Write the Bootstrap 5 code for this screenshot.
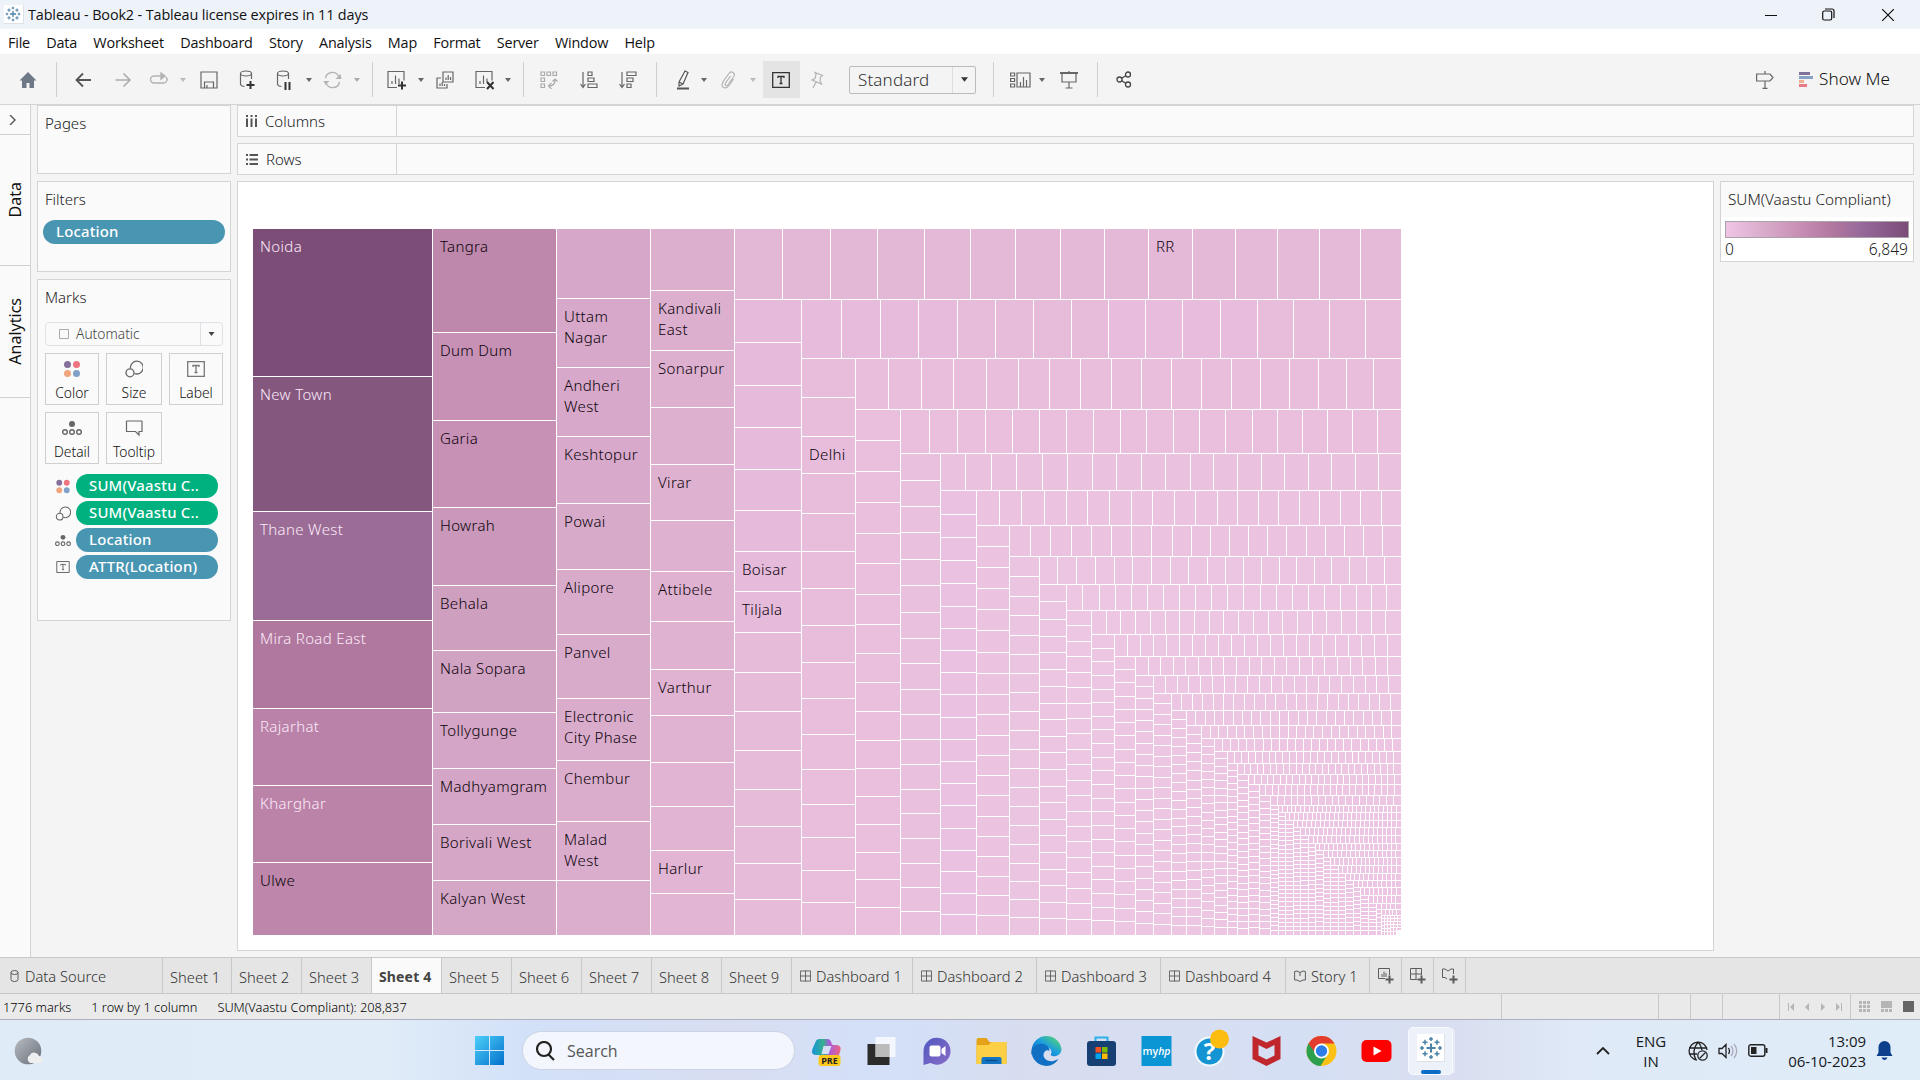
<!DOCTYPE html>
<html lang="en">
<head>
<meta charset="utf-8">
<title>Tableau - Book2</title>
<link rel="stylesheet" href="https://cdn.jsdelivr.net/npm/bootstrap@5.3.0/dist/css/bootstrap.min.css">
<style>
body{width:1920px;height:1080px;overflow:hidden;background:#f4f4f4;font-family:"Noto Sans","Open Sans",sans-serif;font-weight:300;font-size:15px;color:#222;line-height:1.2}
svg{flex:none;display:block}
.title-bar{height:29px;background:#eef3fa;color:#111;font:400 14.4px "Open Sans",sans-serif;letter-spacing:-.12px}
.menu-bar{height:25px;background:#fff;color:#111;font:400 14.4px "Open Sans",sans-serif;gap:16.3px;padding:2px 0 0 8px;letter-spacing:-.2px}
.tool-bar{height:51px;padding-top:1px;border-bottom:1px solid #d4d4d4}
.vsep{width:1px;height:35px;background:#cfcfcf;flex:none}
.t-on{background:#e4e4e4;width:37px;height:37px;padding-right:1px}
.pick{width:127px;height:28px;border:1px solid #bbb;border-radius:2px;font-size:17px;color:#333;letter-spacing:.15px}
.pick .arrow-box{width:23px;border-left:1px solid #ddd}
.work{height:852px}
.rail{width:31px;background:#fafafa;border-right:1px solid #d4d4d4}
.rail .tab-v{border-bottom:1px solid #d0d0d0;color:#111;font-size:16px;font-weight:400;padding-left:2px}
.tab-v span{writing-mode:vertical-rl;transform:rotate(180deg)}
.panel{background:#fafafa;border:1px solid #d4d4d4}
.side{width:194px;margin-left:6px;gap:7px}
.side .panel{padding:8px 7px}
.pill{background:#4996b2;color:#fff;border-radius:12px;height:24px;font-weight:500;font-size:14.9px;padding:0 13px;line-height:23px;white-space:nowrap;letter-spacing:.2px}
.pill.green{background:#00b180}
.mark-btn{border:1px solid #cfcfcf;height:52px;font-size:13.8px;color:#111;padding-top:6px;gap:7px}
.shelf{height:32px}
.shelf .cap{width:159px;border-right:1px solid #d4d4d4;padding-left:8px;gap:8px}
.sheet{width:1477px;height:770px;background:#fff;border:1px solid #d4d4d4;padding:47px 0 0 15px}
.legend{width:194px;height:81px;background:#fff;border:1px solid #d4d4d4}
.legend .cap{background:#fafafa;height:35px;padding:8px 7px;white-space:nowrap;font-size:15.3px}
.legend .ends{padding:2px 5px 0 4px;font-size:15.6px}
.ramp{height:17px;margin:4px 4px 0;border:1px solid #a9a3a8;background:linear-gradient(90deg,#efc5e5,#d5a6c6 25%,#c388b0 45%,#b2789f 58%,#96689a 75%,#7b4c78)}
.tmap{width:1149px;height:707px;font-size:15px;letter-spacing:.34px;line-height:21px;color:#0c040b}
.cell{flex:none;border:0 solid #fff;border-width:0 1px 1px 0;overflow:hidden;padding:7px 0 0 7px}
.cell.snug{padding-right:8px}
.cell.tiny{padding:0}
.last-c{border-right-width:0}
.last-r{border-bottom-width:0}
.lt{color:#fbeaf8}
.sheets{height:37px;background:#e5e5e5;border-top:1px solid #c8c8c8;border-bottom:1px solid #c8c8c8;color:#333;font-size:14.7px}
.sheets>div{border-right:1px solid #c8c8c8;height:35px;line-height:38px;width:70px;white-space:nowrap;flex:none;padding-left:7px}
.sheets .src{width:163px;padding-left:10px;gap:6px}
.sheets .dash{width:124px;padding-left:8px;gap:5px}
.sheets .story{width:84px;gap:5px;padding-left:8px}
.sheets .add{width:32px;padding:0}
.sheets .on{background:#fafafa;font-weight:700;color:#444;font-size:14px;letter-spacing:.15px}
.status{height:26px;background:#eaeaea;border-bottom:1px solid #adb1bd;color:#000;font-size:12.8px;gap:20px;padding-left:3px}
.status>span{padding-top:2px}
.status .cellbox{border-left:1px solid #c8c8c8;height:25px}
.taskbar{height:60px;padding-top:1px;background:linear-gradient(90deg,#dfecf7 0,#e0ecf8 20%,#d2e0f8 28%,#d8def2 38%,#d3e0f8 46%,#d8ddef 54%,#d5dff4 68%,#d9dff0 76%,#dfe9f7 82%,#dfedf8 100%);color:#16181d}
.find{width:273px;height:39px;border-radius:20px;background:#f3f7fd;border:1px solid #cbd3e4;font:400 16px "Open Sans",sans-serif;color:#555;margin-left:18px;padding-left:12px;gap:12px}
.running{width:45px;height:48px;margin:0 9px 0 4px;background:#edf1fa;border:1px solid #f8faff;border-radius:5px;box-shadow:3px 0 0 -1px #e6ebf6}
.clock{font:400 15px/20px "Open Sans",sans-serif}
</style>
</head>
<body class="d-flex flex-column">
<svg width="0" height="0" class="position-absolute">
<defs>
<symbol id="logo" viewBox="0 0 24 24"><g stroke="#4b83a8" stroke-width="1.5" fill="none"><path d="M12 7.5v9M7.5 12h9" stroke-width="2"/><path d="M12 1v4M10 3h4M12 19v4M10 21h4M3 10v4M1 12h4M21 10v4M19 12h4M6 3.7v5M3.500 6.200h5M18 3.700v5M15.500 6.200h5M6 15.300v5M3.500 17.800h5M18 15.300v5M15.500 17.800h5"/></g></symbol>
<symbol id="dn" viewBox="0 0 6 4"><path d="M0 0h6L3 4z" fill="currentColor"/></symbol>
<symbol id="dots" viewBox="0 0 18 18"><circle cx="4.500" cy="4.500" r="3.500" fill="#84709a"/><circle cx="13.500" cy="4.500" r="3.500" fill="#ee7482"/><circle cx="4.500" cy="13.500" r="3.500" fill="#f0a57c"/><circle cx="13.500" cy="13.500" r="3.500" fill="#80a2c8"/></symbol>
<symbol id="size" viewBox="0 0 18 18"><g fill="none" stroke="#666" stroke-width="1.300"><path d="M5.500 8.500A6.400 6.400 0 1 1 9.400 13.500"/><circle cx="5" cy="12.800" r="4"/></g></symbol>
<symbol id="tee" viewBox="0 0 18 16"><path d="M.7.7h16.600v14.600H.7zM6 6V4.500h6V6M9 4.500v7M7.500 11.500h3" fill="none" stroke="currentColor" stroke-width="1.300"/></symbol>
<symbol id="det" viewBox="0 0 20 16"><circle cx="10" cy="4" r="3" fill="#666"/><g fill="none" stroke="#666" stroke-width="1.400"><circle cx="3" cy="12" r="2.300"/><circle cx="10" cy="12" r="2.300"/><circle cx="17" cy="12" r="2.300"/></g></symbol>
<symbol id="grd" viewBox="0 0 12 12"><path d="M.5.500h11v11H.5zM6 0v12M0 6h12" fill="none" stroke="#5c5c5c"/></symbol>
<symbol id="book" viewBox="0 0 12 12"><path d="M.6 1.500l2.400-.5 3 1.500L9 1l2.400.5V10H9l-3 1.500L3 10H.6zM6 2.500V6" fill="none" stroke="#5c5c5c"/></symbol>
<linearGradient id="gw" x2="1" y2="1"><stop stop-color="#4dd0f9"/><stop offset="1" stop-color="#0270cb"/></linearGradient>
<linearGradient id="ge" x1="0" y1="1" x2="1" y2="0"><stop stop-color="#0b5fb4"/><stop offset=".5" stop-color="#1b9de2"/><stop offset="1" stop-color="#5fe05c"/></linearGradient>
<linearGradient id="gc" x2="1" y2="0"><stop stop-color="#1493d8"/><stop offset=".4" stop-color="#36b08f"/><stop offset=".6" stop-color="#a75ddb"/><stop offset="1" stop-color="#f0657d"/></linearGradient>
<linearGradient id="gt" x2="1" y2="1"><stop stop-color="#5059c0"/><stop offset="1" stop-color="#8a6cc8"/></linearGradient>
<linearGradient id="gm" x2="1" y2="1"><stop stop-color="#b6bcc2"/><stop offset="1" stop-color="#6a7078"/></linearGradient>
</defs></svg>

<header class="title-bar d-flex align-items-center">
  <svg width="20" height="19" class="ms-1 bg-white border-end border-bottom me-1 p-0"><use href="#logo" x="1" y="1" width="16" height="16"/></svg>
  <span>Tableau - Book2 - Tableau license expires in 11 days</span>
  <svg width="12" height="14" viewBox="0 0 12 14" class="ms-auto" stroke="#111"><path d="M0 7.500h12"/></svg>
  <svg width="13" height="13" viewBox="0 0 13 13" fill="none" stroke="#111" stroke-width="1.200" style="margin:0 47px 0 45px"><rect x=".7" y="3" width="9" height="9" rx="1.500"/><path d="M3 1h7a2 2 0 0 1 2 2v7"/></svg>
  <svg width="12" height="12" viewBox="0 0 12 12" stroke="#111" stroke-width="1.200" style="margin-right:26px"><path d="M0 0l12 12M12 0L0 12"/></svg>
</header>
<nav class="menu-bar d-flex align-items-center"><span>File</span><span>Data</span><span>Worksheet</span><span>Dashboard</span><span>Story</span><span>Analysis</span><span>Map</span><span>Format</span><span>Server</span><span>Window</span><span>Help</span></nav>

<div class="tool-bar d-flex align-items-center" style="color:#666">
  <svg width="56" height="18" viewBox="0 0 18 18"><path d="M9 1L.5 9.500H3V17h4.500v-5h3v5H15V9.500h2.500z" fill="#6e7886"/></svg>
  <span class="vsep"></span>
  <svg width="52" height="16" viewBox="0 0 16 16" fill="none" stroke="#555" stroke-width="1.800"><path d="M16 8H1M8 1.500L1.500 8 8 14.500"/></svg>
  <svg width="29" height="16" viewBox="0 0 16 16" fill="none" stroke="#aaa" stroke-width="1.500"><path d="M0 8h15M8 1.500L14.500 8 8 14.500"/></svg>
  <svg width="42" height="16" viewBox="0 0 18 16" fill="none" stroke="#b3b3b3" stroke-width="1.400"><path d="M12 4H4a3.500 3.500 0 0 0 0 7h10a3.500 3.500 0 0 0 2-6"/><path d="M11 1l4 3-4 3z" fill="#b3b3b3"/></svg>
  <svg width="6" height="4" color="#bbb"><use href="#dn"/></svg>
  <svg width="46" height="18" viewBox="0 0 18 18" fill="none" stroke="#666" stroke-width="1.200"><path d="M1 1h16v16H1zM4.500 17v-6h9v6M7 17v-3"/></svg>
  <svg width="30" height="20" viewBox="0 0 16 20" fill="none" stroke="#666" stroke-width="1.200"><ellipse cx="7" cy="3.500" rx="5.500" ry="2.500"/><path d="M1.500 3.500v11q1 2 4 2M12.500 3.500V9"/><path d="M11.500 11v8M7.500 15h8" stroke="#333" stroke-width="2"/></svg>
  <svg width="44" height="20" viewBox="0 0 16 20" fill="none" stroke="#666" stroke-width="1.200"><ellipse cx="7" cy="3.500" rx="5.500" ry="2.500"/><path d="M1.500 3.500v11q1 2 4 2M12.500 3.500V9"/><path d="M9.500 12v8M13.500 12v8" stroke="#333" stroke-width="2"/></svg>
  <svg width="6" height="4"><use href="#dn"/></svg>
  <svg width="41" height="18" viewBox="0 0 18 18" fill="none" stroke="#b3b3b3" stroke-width="1.400"><path d="M2 7a7 7 0 0 1 13-2M16 11a7 7 0 0 1-13 2"/><path d="M0 10h6l-4 4zM12 8h6l-1-5z" fill="#b3b3b3" stroke="none"/></svg>
  <svg width="8" height="4" color="#aaa"><use href="#dn"/></svg>
  <span class="vsep" style="margin:0 3px 0 11px"></span>
  <svg width="42" height="20" viewBox="0 0 20 20" fill="none" stroke="#666" stroke-width="1.200"><path d="M10 17.500H1v-16h16v9M5 14v-3M8.500 14V5.500M12 14V8.500"/><path d="M15 11.500v8M11 15.500h8" stroke="#333" stroke-width="2"/></svg>
  <svg width="6" height="4"><use href="#dn"/></svg>
  <svg width="42" height="18" viewBox="0 0 18 18" fill="none" stroke="#666" stroke-width="1.200"><path d="M7 1h10v10H7zM5 7H1v10h10v-4M10 9V6.500M12.200 9V4M14.500 9V6M4 15v-2.500M6.200 15v-4M8.500 15v-2"/></svg>
  <svg width="38" height="20" viewBox="0 0 20 20" fill="none" stroke="#666" stroke-width="1.200"><path d="M10 17.500H1v-16h16v9M5 14v-3M8.500 14V5.500M12 12V8.500"/><path d="M12 12l6.500 7M18.500 12L12 19" stroke="#333" stroke-width="2"/></svg>
  <svg width="8" height="4"><use href="#dn"/></svg>
  <span class="vsep" style="margin-left:11px"></span>
  <svg width="50" height="18" viewBox="0 0 18 18" fill="none" stroke="#aaa" stroke-width="1.200"><path d="M1 1h3.500v3.500H1zM7 1h3.500v3.500H7zM13 1h3.500v3.500H13zM1 7h3.500v3.500H1zM1 13h3.500v3.500H1zM9 15q6 0 6-6M11.500 12L8.500 15l3 3M12.500 10.500L15 8l2.500 2.500"/></svg>
  <svg width="30" height="18" viewBox="0 0 18 18" fill="none" stroke="#666" stroke-width="1.200"><path d="M3 1v15M.5 13L3 16.500 5.500 13M8 1h4v3.500H8zM8 7h6v3.500H8zM8 13h9v3.500H8z"/></svg>
  <svg width="48" height="18" viewBox="0 0 18 18" fill="none" stroke="#666" stroke-width="1.200"><path d="M3 1v15M.5 13L3 16.500 5.500 13M8 1h9v3.500H8zM8 7h6v3.500H8zM8 13h4v3.500H8z"/></svg>
  <span class="vsep" style="margin:0 8px 0 4px"></span>
  <svg width="36" height="20" viewBox="0 0 14 20" fill="none" stroke="#555" stroke-width="1.200"><path d="M3 12L9 1l3 1.500L7 14l-4 2zM3 12l4 2"/><path d="M1 18.500h12" stroke-width="2"/></svg>
  <svg width="6" height="4"><use href="#dn"/></svg>
  <svg width="43" height="18" viewBox="0 0 16 18" fill="none" stroke="#b3b3b3" stroke-width="1.200"><path d="M10 5l-5 7q-1 2 .5 2.500T8 13l5-7q2-3-.5-4.500T8 3L3 10q-3 5 0 6.500T9 14l4-6"/></svg>
  <svg width="6" height="4" color="#bbb"><use href="#dn"/></svg>
  <span class="t-on d-flex align-items-center justify-content-center" style="margin-left:7px;color:#333"><svg width="18" height="16"><use href="#tee"/></svg></span>
  <svg width="34" height="18" viewBox="0 0 14 18" fill="none" stroke="#b3b3b3" stroke-width="1.200"><path d="M5 1.500l7.500 3-2 1.500-.5 4 1.500 3-9.500-4 3-1.500 1-4zM6 11l-3 6"/></svg>
  <div class="pick d-flex align-items-stretch" style="margin-left:15px"><span class="flex-grow-1 ps-2 lh-base">Standard</span><span class="arrow-box d-flex align-items-center justify-content-center"><svg width="7" height="5"><use href="#dn"/></svg></span></div>
  <span class="vsep" style="margin:0 8px 0 17px"></span>
  <svg width="37" height="16" viewBox="0 0 21 16" fill="none" stroke="#666" stroke-width="1.200"><path d="M.6 1h4v3h-4zM.6 6.500h4v3h-4zM.6 12h4v3h-4zM7 1h13v14H7zM10.500 15V10M13.500 15V5M16.500 15V8"/></svg>
  <svg width="6" height="4"><use href="#dn"/></svg>
  <svg width="48" height="18" viewBox="0 0 18 18" fill="none" stroke="#666" stroke-width="1.200"><path d="M0 2h18" stroke-width="2"/><path d="M2 2v9h14V2M9 11v6M5.500 17h7M9 0v2"/></svg>
  <span class="vsep" style="margin-left:4px"></span>
  <svg width="52" height="17" viewBox="0 0 16 17" fill="none" stroke="#444" stroke-width="1.300"><circle cx="3.500" cy="8.500" r="2.500"/><circle cx="12" cy="3.500" r="2.500"/><circle cx="12" cy="13.500" r="2.500"/><path d="M5.700 7.300l4-2.500M5.700 9.700l4 2.500"/></svg>
  <svg width="18" height="18" viewBox="0 0 18 18" class="ms-auto" fill="none" stroke="#666" stroke-width="1.200"><path d="M.6 3H14l3 3.500-3 3.500H.6zM9 0v3M9 10v7.500M6.500 17.400h5"/></svg>
  <svg width="14" height="16" viewBox="0 0 14 16" style="margin:0 6px 0 25px"><path d="M0 0h11v3H0z" fill="#80739b"/><path d="M0 4h14v3H0z" fill="#86a3c5"/><path d="M0 8h5v3H0z" fill="#eeb093"/><path d="M0 12h8v3H0z" fill="#ea7a86"/></svg>
  <span class="text-nowrap" style="font-size:17.2px;color:#111;width:71px;margin-right:30px">Show Me</span>
</div>

<main class="work d-flex">
  <aside class="rail d-flex flex-column">
    <div class="tab-v d-flex align-items-center" style="height:30px"><svg width="7" height="10" viewBox="0 0 7 10" fill="none" stroke="#555" stroke-width="1.400" style="margin-left:7px"><path d="M1 0l5 5-5 5"/></svg></div>
    <div class="tab-v d-flex align-items-center justify-content-center" style="height:131px"><span>Data</span></div>
    <div class="tab-v d-flex align-items-center justify-content-center" style="height:132px"><span>Analytics</span></div>
  </aside>
  <section class="side d-flex flex-column">
    <div class="panel" style="height:69px">Pages</div>
    <div class="panel" style="height:91px">Filters<div class="pill" style="margin:12px -2px 0">Location</div></div>
    <div class="panel" style="height:342px">Marks
      <div class="d-flex border rounded-1 align-items-stretch" style="height:24px;margin:16px 0 7px;font-size:13.8px;color:#444"><svg width="10" height="10" class="align-self-center" style="margin:0 7px 0 13px"><path d="M.5.500h9v9h-9z" fill="none" stroke="#aaa"/></svg><span class="flex-grow-1 align-self-center">Automatic</span><span class="border-start d-flex align-items-center justify-content-center" style="width:22px"><svg width="7" height="4"><use href="#dn"/></svg></span></div>
      <div style="display:grid;grid-template-columns:54px 56px 54px;gap:7px">
        <div class="mark-btn d-flex flex-column align-items-center"><svg width="18" height="18"><use href="#dots"/></svg>Color</div>
        <div class="mark-btn d-flex flex-column align-items-center"><svg width="18" height="18"><use href="#size"/></svg>Size</div>
        <div class="mark-btn d-flex flex-column align-items-center"><svg width="18" height="18" color="#777"><use href="#tee"/></svg>Label</div>
        <div class="mark-btn d-flex flex-column align-items-center"><svg width="20" height="18"><use href="#det"/></svg>Detail</div>
        <div class="mark-btn d-flex flex-column align-items-center"><svg width="18" height="18" viewBox="0 0 18 18"><path d="M1.500 2h15q.5 0 .5.500v10h-3v3.500l-3.500-3.500h-9V2.500q0-.5.500-.5z" fill="none" stroke="#666" stroke-width="1.200"/></svg>Tooltip</div>
      </div>
      <div class="d-flex flex-column" style="gap:3px;margin:10px 5px 0 10px">
        <div class="d-flex align-items-center"><svg width="16" height="15"><use href="#dots"/></svg><div class="pill green flex-grow-1" style="margin-left:5px">SUM(Vaastu C..</div></div>
        <div class="d-flex align-items-center"><svg width="16" height="15"><use href="#size"/></svg><div class="pill green flex-grow-1" style="margin-left:5px">SUM(Vaastu C..</div></div>
        <div class="d-flex align-items-center"><svg width="16" height="13"><use href="#det"/></svg><div class="pill flex-grow-1" style="margin-left:5px">Location</div></div>
        <div class="d-flex align-items-center"><svg width="16" height="12" color="#666"><use href="#tee"/></svg><div class="pill flex-grow-1" style="margin-left:5px">ATTR(Location)</div></div>
      </div>
    </div>
  </section>
  <section class="d-flex flex-column" style="margin-left:6px;gap:6px;width:1677px">
    <div class="panel shelf d-flex"><div class="cap d-flex align-items-center"><svg width="11" height="12" viewBox="0 0 11 12"><path d="M1 0v2M1 3.500V12M5.500 0v2M5.500 3.500V12M10 0v2M10 3.500V12" stroke="#555" stroke-width="2"/></svg>Columns</div></div>
    <div class="panel shelf d-flex"><div class="cap d-flex align-items-center"><svg width="12" height="11" viewBox="0 0 12 11"><path d="M0 1h2M3.500 1H12M0 5.500h2M3.500 5.500H12M0 10h2M3.500 10H12" stroke="#555" stroke-width="2"/></svg>Rows</div></div>
    <div class="d-flex" style="gap:6px">
      <div class="sheet"><div id="tmap" class="tmap d-flex"></div></div>
      <div class="legend"><div class="cap">SUM(Vaastu Compliant)</div><div class="ramp"></div><div class="ends d-flex justify-content-between"><span>0</span><span>6,849</span></div></div>
    </div>
  </section>
</main>

<div class="sheets d-flex">
  <div class="src d-flex align-items-center"><svg width="9" height="12" viewBox="0 0 9 12" fill="none" stroke="#5c5c5c"><path d="M1 2.500v7q0 2 3.500 2T8 9.500v-7q0-2-3.500-2T1 2.500q0 2 3.500 2T8 2.500"/></svg>Data Source</div>
  <div style="width:69px">Sheet 1</div><div>Sheet 2</div><div>Sheet 3</div><div class="on">Sheet 4</div><div>Sheet 5</div><div>Sheet 6</div><div>Sheet 7</div><div>Sheet 8</div><div>Sheet 9</div>
  <div class="dash d-flex align-items-center" style="width:121px"><svg width="11" height="12"><use href="#grd"/></svg>Dashboard 1</div>
  <div class="dash d-flex align-items-center"><svg width="11" height="12"><use href="#grd"/></svg>Dashboard 2</div>
  <div class="dash d-flex align-items-center"><svg width="11" height="12"><use href="#grd"/></svg>Dashboard 3</div>
  <div class="dash d-flex align-items-center" style="width:125px"><svg width="11" height="12"><use href="#grd"/></svg>Dashboard 4</div>
  <div class="story d-flex align-items-center"><svg width="12" height="12"><use href="#book"/></svg>Story 1</div>
  <div class="add d-flex align-items-center justify-content-center"><svg width="16" height="16" viewBox="0 0 16 16" fill="none" stroke="#5c5c5c"><path d="M7 10.500H.5v-10h11V7M4 9V6M6 9V3.500M8 9V5"/><path d="M11.500 7.500v8M7.500 11.500h8" stroke-width="2"/></svg></div>
  <div class="add d-flex align-items-center justify-content-center"><svg width="16" height="16" viewBox="0 0 16 16" fill="none" stroke="#5c5c5c"><path d="M7 11.500H.5V.5h11V7M6 0v11M0 6h11"/><path d="M11.500 7.500v8M7.500 11.500h8" stroke-width="2"/></svg></div>
  <div class="add d-flex align-items-center justify-content-center"><svg width="16" height="16" viewBox="0 0 16 16" fill="none" stroke="#5c5c5c"><path d="M5 11l-2-1.500H.5V1H3l3 2 3-2h2.500v5"/><path d="M11.500 7.500v8M7.500 11.500h8" stroke-width="2"/></svg></div>
</div>
<div class="status d-flex align-items-center">
  <span>1776 marks</span><span>1 row by 1 column</span><span>SUM(Vaastu Compliant): 208,837</span>
  <div class="ms-auto d-flex">
    <div class="cellbox" style="width:157px"></div><div class="cellbox" style="width:32px"></div><div class="cellbox" style="width:32px"></div><div class="cellbox" style="width:57px"></div>
    <div class="cellbox d-flex align-items-center" style="width:71px"><svg width="70" height="8" viewBox="0 0 70 8" fill="#b5b5b5"><path d="M8 0h1v8H8zM14 0v8l-4-4zM29 0v8l-4-4zM41 0v8l4-4zM56 0v8l4-4zM61 0h1v8h-1z"/></svg></div>
    <div class="cellbox d-flex align-items-center" style="width:70px"><svg width="69" height="12" viewBox="0 0 69 12"><path d="M8 1.500h12M8 5.500h12M8 9.500h12" stroke="#b5b5b5" stroke-width="3" stroke-dasharray="3 1"/><path d="M30 0h11v7H30z" fill="#b5b5b5"/><path d="M30 9.500h12" stroke="#b5b5b5" stroke-width="3" stroke-dasharray="3 1"/><path d="M52 0h11v11H52z" fill="#666"/></svg></div>
  </div>
</div>
<footer class="taskbar d-flex align-items-center">
  <svg width="30" height="28" viewBox="0 0 30 28" style="margin:0 431px 0 14px"><circle cx="14" cy="14" r="13.300" fill="url(#gm)"/><path d="M16 26a4.500 4.500 0 0 1 0-8 5 5 0 0 1 9 1 3.500 3.500 0 0 1 0 7z" fill="#eee"/></svg>
  <svg width="29" height="29" viewBox="0 0 29 29" fill="url(#gw)"><path d="M0 0h14v14H0zM15 0h14v14H15zM0 15h14v14H0zM15 15h14v14H15z"/></svg>
  <div class="find d-flex align-items-center"><svg width="20" height="20" viewBox="0 0 20 20" fill="none" stroke="#222" stroke-width="2.200"><circle cx="9" cy="8" r="7"/><path d="M13.500 13.500L19 19"/></svg>Search</div>
  <svg width="55" height="30" viewBox="0 0 30 30" style="margin-left:4px"><path d="M8 3h8q3 0 4 4l1 2h3q6 0 5 5l-2 7q-1 4-5 4h-9q-4 0-4-4l-1-2H5q-6 0-4-6l3-7q1-3 4-3zm4 7l-2 8h7l3-8z" fill="url(#gc)" fill-rule="evenodd"/><rect x="7" y="19" width="22" height="11" rx="3" fill="#fdc91d"/><text x="18" y="28" font-size="9" font-weight="700" text-anchor="middle" fill="#222" font-family="Open Sans">PRE</text></svg>
  <svg width="55" height="30" viewBox="0 0 30 30"><path d="M1 8h22v21H1z" fill="#2b2b2b"/><path d="M9 1h20v20H9z" fill="#fff" opacity=".75"/><path d="M9 8h14v13H9z" fill="#bbb"/></svg>
  <svg width="55" height="30" viewBox="0 0 30 30"><path d="M2 29V15A13.500 13.500 0 1 1 9 27z" fill="url(#gt)"/><rect x="8" y="9.500" width="11" height="11" rx="2" fill="#fff"/><path d="M20 13l4-3v10l-4-3z" fill="#fff"/></svg>
  <svg width="55" height="30" viewBox="0 0 30 30"><path d="M0 4q0-2 2-2h8l3 4h17v22H0z" fill="#e3a21a"/><path d="M0 9h12l3-3h15v22H0z" fill="#fdcf45"/><path d="M5 28v-5q0-2 2-2h16q2 0 2 2v5z" fill="#1474c4"/><path d="M9 24.500h12" stroke="#0a4f8d" stroke-width="1.500"/></svg>
  <svg width="55" height="30" viewBox="0 0 30 30"><path d="M15 0a15 15 0 0 1 15 13c0 6-6 8-9 7s-1-2-1-4c0-3-3-5-6-5C8 11 3 14 0 19V15A15 15 0 0 1 15 0z" fill="url(#ge)"/><path d="M0 15c2-6 8-8 12-7s6 4 6 7c-2-2-6 0-6 4s5 7 10 6l5-2a15 15 0 0 1-12 7A15 15 0 0 1 0 15z" fill="#1270c4"/></svg>
  <svg width="55" height="30" viewBox="0 0 30 30"><path d="M9 6V1.500h12V6" fill="none" stroke="#2db0ea" stroke-width="2"/><rect x=".5" y="5" width="29" height="25" rx="3" fill="#163f74"/><path d="M9 11h5.500v5.500H9z" fill="#f25022"/><path d="M15.500 11H21v5.500h-5.500z" fill="#7fba00"/><path d="M9 17.500h5.500V23H9z" fill="#00a4ef"/><path d="M15.500 17.500H21V23h-5.500z" fill="#ffb900"/></svg>
  <svg width="55" height="30" viewBox="0 0 30 30"><path d="M0 0h30v30H0z" fill="#0a95d5"/><text x="15" y="18.500" font-size="10.500" text-anchor="middle" fill="#fff" font-family="Open Sans" font-weight="600">my<tspan font-style="italic">hp</tspan></text></svg>
  <svg width="55" height="38" viewBox="0 0 34 38" style="margin-bottom:6px"><circle cx="15" cy="22.500" r="14" fill="#1494d3" stroke="#f2f9fd" stroke-width="2"/><text x="15" y="31" font-size="24" font-weight="700" text-anchor="middle" fill="#fff" font-family="Open Sans">?</text><circle cx="25" cy="10" r="9.500" fill="#fdbd10"/></svg>
  <svg width="55" height="30" viewBox="0 0 28 30"><path d="M0 0l14 6.500L28 0v23l-14 7-14-7zm6 9v10.500l8 4 8-4V9l-8 4z" fill="#c0272d" fill-rule="evenodd"/></svg>
  <svg width="55" height="30" viewBox="0 0 30 30"><circle cx="15" cy="15" r="15" fill="#fbc116"/><path d="M15 15L2 7.500A15 15 0 0 0 14 30l7.500-12z" fill="#2da04e"/><path d="M15 7.500h13a15 15 0 0 0-26 0l7 10z" fill="#e33b2e"/><circle cx="15" cy="15" r="7.500" fill="#fff"/><circle cx="15" cy="15" r="5.700" fill="#2f7de9"/></svg>
  <svg width="55" height="30" viewBox="0 0 30 30"><rect y="4" width="30" height="22" rx="5" fill="#f00"/><path d="M12 10.500v9l8-4.500z" fill="#fff"/></svg>
  <div class="running d-flex flex-column align-items-center justify-content-end"><svg width="28" height="28" class="bg-white border-end border-bottom mb-2"><use href="#logo" x="2" y="2" width="24" height="24"/></svg><span class="rounded-pill" style="width:20px;height:4px;background:#0a6cc4"></span></div>
  <svg width="14" height="8" viewBox="0 0 14 8" class="ms-auto" fill="none" stroke="#222" stroke-width="1.800"><path d="M1 7l6-6 6 6"/></svg>
  <div class="clock text-center" style="margin:0 22px 0 26px">ENG<br>IN</div>
  <svg width="20" height="20" viewBox="0 0 20 20" fill="none" stroke="#222" stroke-width="1.300"><path d="M9 19a9 9 0 1 1 10-10M1 7h17M1 13h8M8 19Q3 10 10 1q3 3 4 8"/><circle cx="14.500" cy="14.500" r="4.700"/><path d="M11.500 17.500l6-6"/></svg>
  <svg width="20" height="16" viewBox="0 0 20 16" fill="none" stroke="#222" stroke-width="1.300" style="margin:0 10px"><path d="M1 5.500h3l4-4v13l-4-4H1zM10.500 5q2 3 0 6"/><path d="M13 3q4 5 0 10M16 1q5.500 7 0 14" stroke="#aab"/></svg>
  <svg width="20" height="13" viewBox="0 0 20 13" fill="none" stroke="#222" stroke-width="1.400"><rect x=".8" y=".8" width="16" height="11.400" rx="2"/><path d="M18.500 4v5" stroke-width="2"/><path d="M3 3h5.500v7H3z" fill="#222" stroke="none"/></svg>
  <div class="clock text-end" style="margin:0 10px 0 20px;letter-spacing:-.05px">13:09<br>06-10-2023</div>
  <svg width="17" height="19" viewBox="0 0 17 19" style="margin-right:27px" fill="#0c3f8c"><path d="M8.500 0a6 6 0 0 1 6 6v5.500l2 3.500H.5l2-3.500V6a6 6 0 0 1 6-6zM5.500 16.500h6q-1 2.500-3 2.500t-3-2.500z"/></svg>
</footer>

<script>
// Treemap bands. c = column (x of its right edge), r = row (y of its bottom edge);
// the array holds the inner dividers, a number is an even step between them.
const X1=1401, Y1=935;
const bands=[
['c',432,[376,511,620,708,785,862],['Noida','New Town','Thane West','Mira Road East','Rajarhat','Kharghar','Ulwe'],['#7b4d77','#84577f','#9b6c96','#b0789e','#ba82a8','#bb83a8','#bd86aa']],
['c',556,[332,420,507,585,650,712,768,824,880],['Tangra','Dum Dum','Garia','Howrah','Behala','Nala Sopara','Tollygunge','Madhyamgram','Borivali West','Kalyan West'],['#be87ac','#c791b6','#c791b6','#ca98ba','#cf9fc0','#d1a3c3','#d4a5c6','#d4a5c6','#d5a6c6','#d5a7c7']],
['c',650,[298,367,436,503,569,634,698,760,821,880],['','Uttam Nagar','Andheri West','Keshtopur','Powai','Alipore','Panvel','Electronic City Phase','Chembur','Malad West',''],['#d6a7c8','#dbaecd']],
['c',734,[290,350,407,464,520,571,621,669,715,762,806,850,893],['','Kandivali East','Sonarpur','','Virar','','Attibele','','Varthur','','','','Harlur',''],['#ddafce','#e2b5d4']],
['r',299,[782,830,877,924,970,1015,1060,1104,1148,1192,1235,1277,1319,1360],['','','','','','','','','','RR'],['#e3b7d6','#e5b9d8']],
['c',801,[342,385,427,469,510,551,591,632,672,711,750,789,826,863,899],['','','','','','','Boisar','Tiljala'],['#e6badb','#e6bbda']],
['r',358,[841,880,918,957,995,1033,1071,1108,1145,1182,1220,1257,1293,1329,1365],0,['#e7bbdb','#e8bddc']],
['c',855,[397,436,473,513,551,588,625,662,698,734,769,804,837,870,902],['','','Delhi'],['#e8bddc','#e9bedd']],
['r',409,[888,921,953,986,1018,1049,1080,1111,1141,1171,1201,1231,1260,1289,1318,1346,1373]],
['c',900,[440,471,502,533,563,594,624,653,682,711,740,768,796,824,852,879,907]],
['r',453,[929,957,985,1012,1039,1066,1093,1120,1146,1173,1199,1225,1252,1277,1302,1327,1352,1377]],
['c',940,[480,506,532,559,585,612,638,663,689,714,739,764,789,813,838,863,887,911]],
['r',490,[965,991,1016,1042,1067,1092,1116,1141,1165,1190,1213,1237,1261,1284,1308,1331,1355,1378]],
['c',976,[514,537,560,583,606,628,650,672,694,717,739,761,783,805,828,850,871,893,914]],
['r',525,[999,1021,1044,1066,1087,1109,1131,1152,1174,1195,1217,1237,1258,1278,1299,1319,1340,1360,1381]],
['c',1009,[546,567,588,609,630,652,673,694,714,735,755,775,795,816,836,856,876,895,915]],
['r',556,[1030,1050,1071,1091,1111,1131,1151,1172,1191,1210,1229,1248,1267,1286,1306,1325,1344,1363,1382]],
['c',1039,[576,596,615,635,654,673,692,711,730,749,768,787,806,825,844,863,881,899,917]],
['r',584,[1057,1076,1095,1114,1132,1151,1170,1188,1207,1225,1243,1261,1279,1296,1314,1331,1349,1366,1384]],
['c',1066,[601,619,636,652,669,686,703,719,736,752,769,786,802,819,835,852,869,885,902,918]],
['r',610,[1082,1099,1115,1131,1147,1163,1179,1195,1211,1227,1243,1260,1276,1292,1308,1324,1340,1356,1371,1386]],
['c',1091,15.5],['r',634,14.8],['c',1114,13.6],['r',656,13.1],['c',1135,13.2],['r',675,12.5],['c',1153,11.3],
['r',693,11.5],['c',1171,10.5],['r',710,10.5],['c',1186,9],['r',725,9.3],['c',1201,9.2],['r',738,8.8],['c',1214,8.3],
['r',751,8],['c',1227,7.4],['r',763,7],['c',1237,6.7],['r',774,6.5],['c',1248,6.5],['r',784,6.3],['c',1259,6.4],
['r',795,6.4],['c',1270,6.3],['r',805,7],['c',1278,4.3],['r',812,4.4]];
[1285,1293,1300,1308,1315,1323,1330,1338,1345,1353,1360,1368,1376,1381].forEach((x,i)=>{
  bands.push(['c',x,4.1],['r',[820,827,835,843,850,857,865,873,880,887,895,903,909,915][i],i>12?4:4.5]);
});
for(let k=0;k<5;k++) bands.push(['c',1384+k*3,3],['r',918+k*3,3]);

const mix=(a,b,t)=>'#'+[1,3,5].map(i=>Math.round(parseInt(a.substr(i,2),16)*(1-t)+parseInt(b.substr(i,2),16)*t).toString(16).padStart(2,'0')).join('');
let host=document.getElementById('tmap'), x=253, y=229;
bands.forEach(([kind,edge,cuts,names,cols],n)=>{
  const col=kind==='c', start=col?y:x, stop=col?Y1:X1;
  if(typeof cuts==='number'){
    const k=Math.max(1,Math.round((stop-start)/cuts)), s=(stop-start)/k;
    cuts=Array.from({length:k-1},(_,i)=>Math.round(start+s*(i+1))-1);
  }
  const ends=cuts.map(v=>v+1).concat(stop);
  const thick=edge+1-(col?x:y);
  const band=document.createElement('div');
  band.className='d-flex flex-shrink-0 '+(col?'flex-column':'');
  let p=start;
  ends.forEach((e,i)=>{
    const d=document.createElement('div'), name=names&&names[i]||'';
    d.className='cell'+(n>8?' tiny':'')+(n===2?' snug':'')+(i===ends.length-1?(col?' last-r':' last-c'):'')+(n===0&&i<6?' lt':'');
    const w=col?thick:e-p, h=col?e-p:thick;
    const base=cols?(cols.length>2?cols[i]:mix(cols[0],cols[1],i/(ends.length-1))):mix('#e9bedd','#ecc6e3',Math.min(1,(n-8)/12));
    d.style.cssText=`width:${w}px;height:${h}px;background:${base}`;
    d.textContent=name;
    band.append(d); p=e;
  });
  const rest=document.createElement('div');
  rest.className='d-flex flex-shrink-0';
  if(col) x=edge+1; else y=edge+1;
  // The remaining rectangle lies beside a column or under a row.
  host.classList.toggle('flex-column',!col);
  host.append(band,rest);
  host=rest;
});
</script>
<script src="https://cdn.jsdelivr.net/npm/bootstrap@5.3.0/dist/js/bootstrap.bundle.min.js"></script>
</body>
</html>
